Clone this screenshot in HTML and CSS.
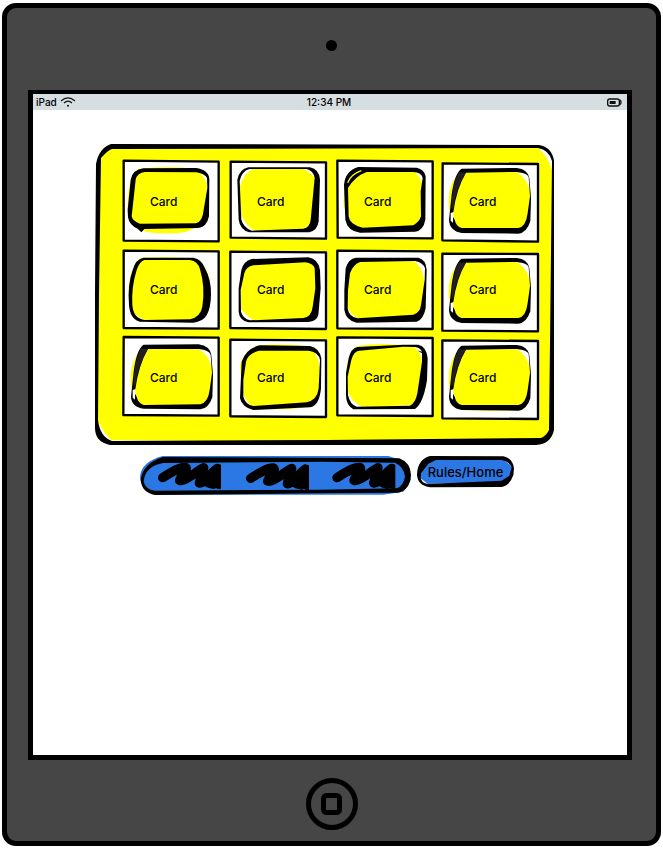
FILE: index.html
```html
<!DOCTYPE html>
<html lang="en">
<head>
<meta charset="utf-8">
<title>Card Game</title>
<link rel="stylesheet" href="styles.css">
</head>
<body>
<div class="tablet">
  <div class="camera"></div>
  <div class="screen">
    <header class="status">
      <div class="carrier"><span>iPad</span>
        <svg width="16" height="12" viewBox="0 0 48 36" fill="none" stroke="#111" stroke-width="3.5"><path d="M3 15Q24-4 45 15" /><path d="M12 21Q24 10 36 21"/><circle cx="24" cy="29" r="3" fill="#111" stroke="none"/></svg>
      </div>
      <time>12:34 PM</time>
      <svg class="battery" width="15" height="9" viewBox="0 0 45 27" fill="none" stroke="#111" stroke-width="4"><rect x="2" y="3" width="35" height="21" rx="6"/><path d="M38 6Q42 7 42 13T38 21"/><rect x="8" y="9" width="18" height="9" fill="#111" stroke="none"/></svg>
    </header>
    <main class="game">
      <section class="board">
        <svg class="sketch" viewBox="0 0 458 301" preserveAspectRatio="none">
          <path class="yellow" d="M15 3L445 3Q455 9 456 22L456 285Q450 300 430 300L15 296Q3 292 1 275L2 20Q5 5 15 3Z"/>
          <path class="paper" d="M442 4Q455 6 456 17L456 26Q452 12 442 4ZM2 277Q8 290 17 298L8 297Q1 292 2 277Z"/>
          <path class="ink" d="M15 0L443 1Q456 3 458 17L458 286Q455 300 440 301L14 301Q-1 298 -1 284L-1 150L0 20Q3 4 15 0ZM16 5Q12 6 5 14L3 150L2 276Q4 293 16 297L230 296L445 294Q450 292 453 286L454 200L456 17Q453 6 442 4Z"/>
        </svg>

        <button class="card" type="button">
          <svg class="sketch" viewBox="96 66 294 246" preserveAspectRatio="none">
            <path class="frame" d="M101 68L386 71L386 310L101 308Z"/>
            <path class="yellow" d="M150 92Q240 84 310 92Q340 104 352 140L340 245Q310 284 260 286Q180 288 160 278L130 255Q112 240 113 200Q116 100 150 92Z"/>
            <path class="ink" d="M160 91L318 90Q358 96 358 125L357 235Q350 268 325 270L163 273L154 283L143 272Q118 262 114 238L113 215L122 125Q128 95 160 91ZM165 102Q142 104 137 125L125 235Q128 250 150 257L318 256Q338 250 341 215L352 150L351 120Q345 108 320 103Z"/>
          </svg><span>Card</span>
        </button>
        <button class="card" type="button">
          <svg class="sketch" viewBox="417 66 294 246" preserveAspectRatio="none">
            <path class="frame" d="M422 71L708 73L708 302L422 299Z"/>
            <path class="yellow" d="M490 92Q560 86 640 93Q690 115 688 180Q688 255 650 278Q560 285 490 276Q450 250 446 190Q444 115 490 92Z"/>
            <path class="ink" d="M475 88L660 88Q688 94 690 125L686 250Q682 278 658 283L478 283Q450 275 446 245L442 125Q448 94 475 88ZM478 93Q455 100 449 128L454 245Q460 268 485 278L640 272Q660 268 662 245L674 120Q670 98 650 93Z"/>
          </svg><span>Card</span>
        </button>
        <button class="card" type="button">
          <svg class="sketch" viewBox="48 66 294 246" preserveAspectRatio="none">
            <path class="frame" d="M52 68L338 70L338 301L53 299Z"/>
            <path class="yellow" d="M115 92L280 98Q303 115 310 150L307 255L285 273L135 280Q88 260 84 235L71 205Q68 110 115 92Z"/>
            <path class="ink" d="M115 87L290 89Q313 94 317 115L316 245Q310 278 285 281L120 284Q82 278 76 245L72 140Q76 98 115 87ZM140 102Q106 114 84 150L86 235Q88 260 128 269L280 262Q298 252 303 235L302 160L308 120Q305 104 280 102Z"/>
            <path class="scratch" d="M83 134Q94 108 124 98"/>
          </svg><span>Card</span>
        </button>
        <button class="card card-last" type="button">
          <svg class="sketch" viewBox="369 66 294 246" preserveAspectRatio="none">
            <path class="frame" d="M368 76L654 78L654 311L367 307Z"/>
            <path class="yellow" d="M425 94L585 100Q620 110 632 170Q630 255 610 279Q560 286 430 283Q398 260 389 220Q375 145 425 94Z"/>
            <path class="paper" d="M588 101Q625 100 626 145Q615 115 588 101ZM392 225L400 225L401 255L393 265Z"/>
            <path class="ink" d="M425 92L590 90Q624 94 628 120L633 180L631 250Q620 285 595 287L425 285Q388 278 387 245L395 170Q404 104 425 92ZM438 104Q410 150 400 222L392 225L392 248L399 254L399 236L404 245Q408 265 425 270L595 270Q618 266 623 225L630 175L626 118Q622 105 590 102Z"/>
            <path class="shade" d="M416 103L437 104Q408 150 400 212L394 212Q396 140 416 103Z"/>
          </svg><span>Card</span>
        </button>

        <button class="card" type="button">
          <svg class="sketch" viewBox="96 30 294 237" preserveAspectRatio="none">
            <path class="frame" d="M101 32L386 34L386 266L101 264Z"/>
            <path class="yellow" d="M150 54Q240 48 320 56Q352 82 360 120L345 225L300 244L165 240Q122 225 116 180Q110 100 150 54Z"/>
            <path class="ink" d="M160 53L310 53Q336 58 345 85Q364 120 363 165Q362 205 350 226Q338 246 310 248L150 245Q120 238 117 195Q112 135 128 90Q136 58 160 53ZM163 60Q148 65 140 90Q124 140 127 195Q130 236 165 240L300 238Q332 230 337 200Q346 140 330 88Q324 64 300 60Z"/>
          </svg><span>Card</span>
        </button>
        <button class="card" type="button">
          <svg class="sketch" viewBox="417 30 294 237" preserveAspectRatio="none">
            <path class="frame" d="M421 35L708 37L708 267L421 264Z"/>
            <path class="yellow" d="M480 58L650 54Q690 90 690 145L680 235L490 241Q458 220 447 195Q444 90 480 58Z"/>
            <path class="ink" d="M485 57L655 52Q686 58 690 90L692 145L685 225Q680 244 655 246L475 247Q448 240 446 215L446 145L454 90Q460 64 485 57ZM490 76Q468 80 463 100L452 150L453 215Q459 236 480 241L640 234Q665 230 668 200L676 145L674 85Q670 70 645 67Z"/>
          </svg><span>Card</span>
        </button>
        <button class="card" type="button">
          <svg class="sketch" viewBox="48 30 294 237" preserveAspectRatio="none">
            <path class="frame" d="M52 32L338 34L338 267L52 265Z"/>
            <path class="yellow" d="M110 62L280 64Q312 80 314 140L306 215L280 232L115 237Q87 220 80 195L78 110Z"/>
            <path class="ink" d="M108 53L295 53Q318 58 320 90L317 205Q310 240 290 245L110 248Q78 242 73 210L73 150L77 85Q85 56 108 53ZM120 66Q98 75 90 100L84 150L83 205Q86 230 112 235L280 224Q300 219 303 195L314 120L315 85Q310 68 285 63Z"/>
          </svg><span>Card</span>
        </button>
        <button class="card card-last" type="button">
          <svg class="sketch" viewBox="369 30 294 237" preserveAspectRatio="none">
            <path class="frame" d="M367 41L654 42L654 274L367 272Z"/>
            <path class="yellow" d="M425 58L585 64Q620 74 632 134Q630 219 610 243Q560 250 430 247Q398 224 389 184Q375 109 425 58Z"/>
            <path class="paper" d="M588 65Q625 64 626 109Q615 79 588 65ZM392 189L400 189L401 219L393 229Z"/>
            <path class="ink" d="M425 56L590 54Q624 58 628 84L633 144L631 214Q620 249 595 251L425 249Q388 242 387 209L395 134Q404 68 425 56ZM438 68Q410 114 400 186L392 189L392 212L399 218L399 200L404 209Q408 229 425 234L595 234Q618 230 623 189L630 139L626 82Q622 69 590 66Z"/>
            <path class="shade" d="M416 67L437 68Q408 114 400 176L394 176Q396 104 416 67Z"/>
          </svg><span>Card</span>
        </button>

        <button class="card" type="button">
          <svg class="sketch" viewBox="96 21 294 240" preserveAspectRatio="none">
            <path class="frame" d="M101 21L386 23L386 257L100 255Z"/>
            <path class="yellow" d="M161 49L321 55Q356 65 368 125Q366 210 346 234Q296 237 166 234Q134 215 125 175Q111 100 161 49Z"/>
            <path class="paper" d="M324 56Q361 55 362 100Q351 70 324 56ZM128 180L136 180L137 210L129 220Z"/>
            <path class="ink" d="M161 44L326 43Q360 48 364 75L369 135L367 202Q356 236 331 238L161 236Q124 230 123 200L131 125Q140 57 161 44ZM174 57Q146 105 136 177L128 180L128 203L135 209L135 191L140 200Q144 219 161 225L331 223Q354 217 359 180L366 130L362 75Q358 60 326 57Z"/>
            <path class="shade" d="M152 56L173 57Q144 105 136 167L130 167Q132 95 152 56Z"/>
          </svg><span>Card</span>
        </button>
        <button class="card" type="button">
          <svg class="sketch" viewBox="417 21 294 240" preserveAspectRatio="none">
            <path class="frame" d="M421 29L708 31L708 261L421 259Z"/>
            <path class="yellow" d="M500 47Q580 38 660 50Q692 80 692 140Q692 210 665 230Q570 243 490 235Q462 210 455 175L450 105Q463 65 500 47Z"/>
            <path class="ink" d="M510 46L660 48Q688 54 694 85L693 175Q688 228 660 232L490 240Q456 232 450 205L455 95Q468 55 510 46ZM508 62Q474 70 468 95L460 150L460 200Q466 224 490 228L650 217Q682 210 686 175L690 90Q686 66 655 62Z"/>
          </svg><span>Card</span>
        </button>
        <button class="card" type="button">
          <svg class="sketch" viewBox="48 21 294 240" preserveAspectRatio="none">
            <path class="frame" d="M52 22L338 24L338 258L52 256Z"/>
            <path class="yellow" d="M112 48Q170 38 240 44L280 50Q305 65 308 100L285 225L130 232Q90 215 80 175Q70 80 112 48Z"/>
            <path class="ink" d="M112 51L250 44L295 44Q320 50 323 85L321 150Q310 220 285 237L100 238Q78 225 78 195L78 130L86 85Q92 56 112 51ZM118 62Q100 64 94 90L83 140L84 195Q90 224 110 230L270 227Q286 220 292 190L306 95L306 70L292 61L306 65Q300 53 285 51L250 50Z"/>
          </svg><span>Card</span>
        </button>
        <button class="card card-last" type="button">
          <svg class="sketch" viewBox="369 21 294 240" preserveAspectRatio="none">
            <path class="frame" d="M367 31L654 33L654 267L367 265Z"/>
            <path class="yellow" d="M425 49L585 55Q620 65 632 125Q630 210 610 238Q560 245 430 240Q398 215 389 175Q375 100 425 49Z"/>
            <path class="paper" d="M588 56Q625 55 626 100Q615 70 588 56ZM392 180L400 180L401 210L393 220Z"/>
            <path class="ink" d="M425 47L590 45Q624 49 628 75L633 135L631 205Q620 240 595 242L425 240Q388 233 387 200L395 125Q404 59 425 47ZM438 59Q410 105 400 177L392 180L392 203L399 209L399 191L404 200Q408 220 425 225L595 225Q618 221 623 180L630 130L626 73Q622 60 590 57Z"/>
            <path class="shade" d="M416 58L437 59Q408 105 400 167L394 167Q396 95 416 58Z"/>
          </svg><span>Card</span>
        </button>
      </section>

      <nav class="controls">
        <div class="panel">
          <svg class="sketch" viewBox="30 18 813 117" preserveAspectRatio="none">
            <path class="blue" d="M98 18L775 18L805 28L835 50L842 90L820 125L760 134L80 134Q32 120 30 80Q34 35 98 18Z"/>
            <path class="ink" d="M98 21L808 25Q842 38 843 75Q840 120 805 128L570 130L75 135Q34 128 32 88Q40 40 98 21ZM100 39Q45 48 41 95Q46 118 75 122L570 119L800 115Q820 108 825 80Q822 50 795 38L570 35Z"/>
            <clipPath id="edge"><path d="M80 30H273V125H80Z"/></clipPath>
            <g class="scribble">
              <g id="scribble" clip-path="url(#edge)"><path d="M98 83C125 66 148 51 166 52C176 58 152 78 149 91C164 97 196 66 221 53L208 99C222 102 240 70 262 55L250 103L236 99M268 57V104"/></g>
              <use href="#scribble" x="264" y="2"/>
              <use href="#scribble" x="523"/>
            </g>
          </svg>
        </div>
        <a class="rules" href="#rules">
          <svg class="sketch" viewBox="291 18 291 96" preserveAspectRatio="none">
            <path class="blue" d="M330 24L545 24L575 45L580 75L550 96L315 102L295 82L300 50Z"/>
            <path class="paper" d="M550 29Q572 34 574 50Q565 38 550 29ZM302 85L323 102Q300 104 302 85Z"/>
            <path class="ink" d="M330 18L550 19Q578 24 582 55L580 75Q570 106 545 111L330 112Q293 106 291 75Q292 28 330 18ZM348 30L325 41L303 70L302 85Q306 100 323 102L545 92L568 77L575 52Q568 35 545 30Z"/>
          </svg><span>Rules/Home</span>
        </a>
      </nav>
    </main>
  </div>
  <button class="home" type="button" aria-label="Home">
    <svg width="54" height="54" viewBox="0 0 54 54" fill="none" stroke="#000" stroke-width="5"><circle cx="27" cy="27" r="23.5"/><rect x="18.5" y="18.5" width="16" height="17" rx="3"/></svg>
  </button>
</div>
</body>
</html>
```
FILE: styles.css
```css
* { box-sizing: border-box; }

body {
  margin: 0;
  padding: 3px 2px 2px;
  background: #fff;
  color: #000;
  font-family: Inter, "Liberation Sans", sans-serif;
}

button {
  padding: 0;
  border: 0;
  background: none;
  color: inherit;
  font: inherit;
}

.tablet {
  display: flex;
  flex-direction: column;
  align-items: center;
  min-height: calc(100vh - 5px);
  padding: 32px 21px 10px;
  border: 5px solid #000;
  border-radius: 14px;
  background: #464646;
}

.camera {
  width: 11px;
  height: 11px;
  margin-bottom: 39px;
  border-radius: 50%;
  background: #000;
}

.screen {
  align-self: stretch;
  flex: 1;
  margin: 0 3px 17px 0;
  border: 5px solid #000;
  border-top-width: 4px;
  background: #fff;
}

.status {
  display: grid;
  grid-template-columns: 1fr auto 1fr;
  align-items: center;
  height: 16px;
  padding: 0 5px 0 3px;
  background: #d7dee1;
  font-size: 10px;
  font-weight: 500;
}

.carrier {
  display: flex;
  align-items: center;
  gap: 3px;
}

.battery { justify-self: end; }

.game {
  max-width: 521px;
  padding: 34px 0 0 63px;
}

.board {
  position: relative;
  display: grid;
  grid-template-columns: repeat(4, 1fr);
  grid-template-rows: 82px 79px 80px;
  gap: 8px 9px;
  padding: 16px 13px 28px 26px;
}

.sketch {
  position: absolute;
  inset: 0;
  width: 100%;
  height: 100%;
  overflow: visible;
}

.yellow { fill: #ff0; }
.paper { fill: #fff; }
.blue { fill: #2b78e4; }
.ink { fill: #000; fill-rule: evenodd; }
.shade { fill: #231f20; }
.frame { fill: #fff; stroke: #000; stroke-width: 7; stroke-linejoin: round; }
.scratch { fill: none; stroke: #ff0; stroke-width: 4; }
.scribble { fill: none; stroke: #000; stroke-width: 28; stroke-linecap: round; stroke-linejoin: round; }

.card {
  position: relative;
  padding-left: 28px;
  font-size: 12px;
  font-weight: 500;
  text-align: left;
}

.card-last { padding-left: 26px; }

.card span,
.rules span { position: relative; }

.controls {
  display: flex;
  gap: 6px;
  padding: 11px 40px 0 44px;
}

.panel {
  position: relative;
  flex: 1;
  height: 39px;
}

.rules {
  position: relative;
  display: flex;
  align-items: center;
  justify-content: center;
  width: 97px;
  height: 32px;
  color: #000;
  font-size: 13px;
  font-weight: 500;
  text-decoration: none;
}

.home {
  width: 54px;
  height: 54px;
}

.home svg { display: block; }
```
